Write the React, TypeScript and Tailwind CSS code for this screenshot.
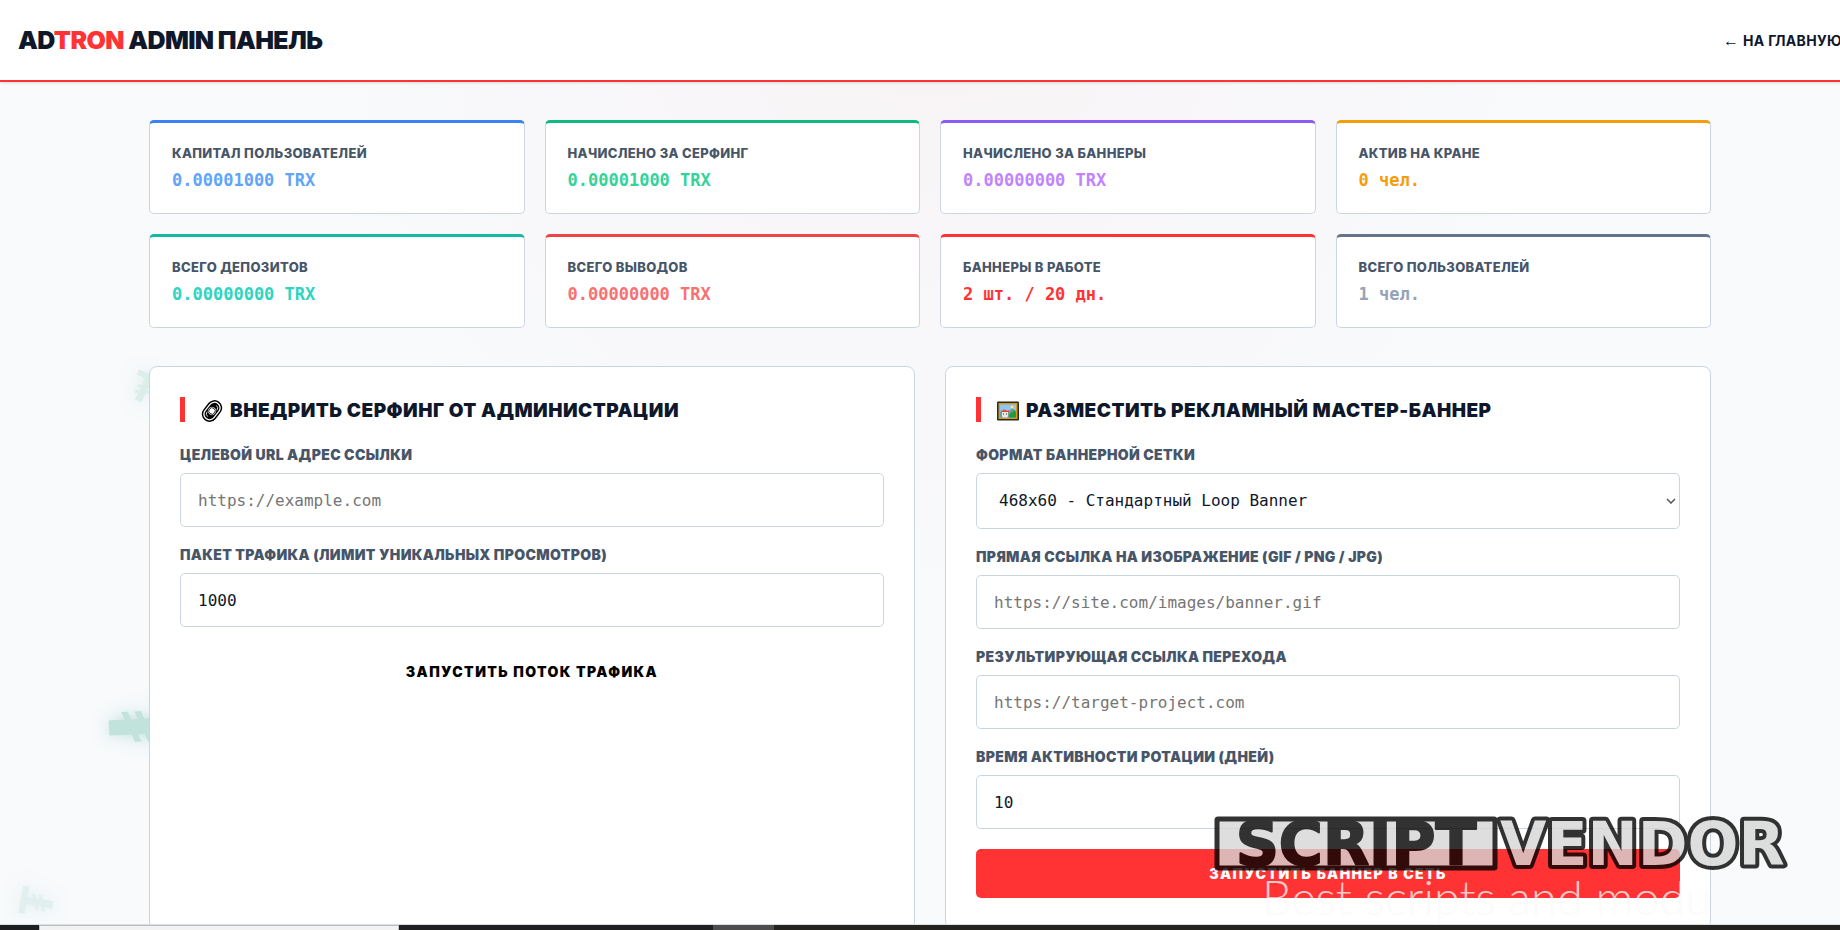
import React from "react";

const stats = [
    { label: "Капитал пользователей", value: "0.00001000 TRX", border: "border-t-[#3b82f6]", color: "text-[#60a5fa]" },
    { label: "Начислено за серфинг", value: "0.00001000 TRX", border: "border-t-[#10b981]", color: "text-[#34d399]" },
    { label: "Начислено за баннеры", value: "0.00000000 TRX", border: "border-t-[#8b5cf6]", color: "text-[#c084fc]" },
    { label: "Актив на кране", value: "0 чел.", border: "border-t-[#f59e0b]", color: "text-[#f59e0b]" },
    { label: "Всего депозитов", value: "0.00000000 TRX", border: "border-t-[#14b8a6]", color: "text-[#2dd4bf]" },
    { label: "Всего выводов", value: "0.00000000 TRX", border: "border-t-[#ef4444]", color: "text-[#f87171]" },
    { label: "Баннеры в работе", value: "2 шт. / 20 дн.", border: "border-t-[#ff3333]", color: "text-[#ff3333]" },
    { label: "Всего пользователей", value: "1 чел.", border: "border-t-[#64748b]", color: "text-[#94a3b8]" },
];

const control =
    "w-full rounded-[5px] border border-[#cbd5e1] bg-white font-['DejaVu_Sans_Mono',monospace] text-base text-[#0f172a] placeholder:text-[#757575] outline-none focus:border-[#ff3333]";

const Header = () => (
    <header className="flex h-[82px] shrink-0 items-center justify-between border-b-2 border-[#ff3333] bg-white px-[18px] pt-[2px] shadow-sm">
        <h1 className="text-[25px] font-black tracking-tight">
            AD<span className="text-[#ff3333]">TRON</span> ADMIN ПАНЕЛЬ
        </h1>
        <a href="/" className="whitespace-nowrap text-sm font-bold uppercase tracking-wide hover:text-[#ff3333]">
            <span className="font-['Liberation_Serif',serif] text-base leading-none font-normal">←</span> На главную
        </a>
    </header>
);

type FieldProps = { id: string; label: string; children: React.ReactNode };

const Field = ({ id, label, children }: FieldProps) => (
    <div className="mb-5">
        <label htmlFor={id} className="mb-[10px] block text-sm leading-4 font-black uppercase tracking-wide text-[#475569]">
            {label}
        </label>
        {children}
    </div>
);

const TextField = ({ id, label, ...rest }: { id: string; label: string } & React.InputHTMLAttributes<HTMLInputElement>) => (
    <Field id={id} label={label}>
        <input id={id} className={`${control} h-[54px] px-[17px]`} {...rest} />
    </Field>
);

const Panel = ({ icon, title, children }: { icon: React.ReactNode; title: string; children: React.ReactNode }) => (
    <section className="rounded-lg border border-[#cbd5e1] bg-white p-[30px]">
        <h2 className="mb-[25px] flex h-[25px] items-center gap-[7px] border-l-[5px] border-[#ff3333] pt-[3px] pl-4 text-[19px] font-black uppercase tracking-wide">
            {icon}
            {title}
        </h2>
        {children}
    </section>
);

const LinkIcon = () => (
    <svg viewBox="0 0 22 22" className="h-[22px] w-[22px]" fill="none">
        <g transform="rotate(-52 11 11)">
            <rect x="0" y="4" width="22" height="14" rx="7" fill="#fff" stroke="#000" strokeWidth="1.5" />
            <rect x="2" y="6" width="18" height="10" rx="5" fill="#000" />
            <path d="M4 11a3.4 3.4 0 0 1 3.4-3.4M18 11a3.4 3.4 0 0 1-3.4 3.4" stroke="#fff" strokeWidth="0.8" />
            <circle cx="11" cy="11" r="4" fill="#fff" />
            <circle cx="11" cy="11" r="3.2" stroke="#000" strokeWidth="0.8" />
        </g>
    </svg>
);

const PictureIcon = () => (
    <svg viewBox="0 0 22 20" className="h-5 w-[22px]">
        <rect width="22" height="19" y="0.5" rx="1" fill="#26282b" />
        <rect x="1.5" y="2" width="19" height="16" fill="#d89a16" />
        <rect x="3" y="3.5" width="16" height="13" fill="#8cc8f0" />
        <path d="M3 11l4-3 4 3 4-4 4 3v6.500H3z" fill="#6f9d90" />
        <circle cx="15" cy="6" r="1.500" fill="#ffe680" />
        <path d="M12 16.500c0-4 2-5 3-5s1-2 2-2 2 2 2 3v4z" fill="#239a3b" />
        <path d="M5 8.500l1.500 1.500h3L11 8.500v7l-1 1H6l-1-1z" fill="#e8e8e8" />
        <path d="M4.500 9.500h7.500v1.500H4.500z" fill="#ef3b2d" />
        <path d="M6 12.500h1v1H6zM9 12.500h1v1H9z" fill="#333" />
    </svg>
);

/* Floating currency signs behind the content */
const Background = () => (
    <svg
        className="pointer-events-none absolute inset-0 h-full w-full font-['Inter',sans-serif] font-extrabold [text-shadow:0_0_15px_#26a17b]"
        fill="#26a17b"
        textAnchor="middle"
        aria-hidden="true"
    >
        <text transform="translate(138 401) rotate(25)" fontSize="40" opacity="0.13">₮</text>
        <text transform="translate(109 728) rotate(87)" fontSize="88" opacity="0.25">₮</text>
        <text transform="translate(53 905) rotate(-80)" fontSize="45" opacity="0.1">₮</text>
    </svg>
);

const Watermark = () => (
    <svg
        viewBox="0 0 630 110"
        className="pointer-events-none absolute right-0 bottom-[5px] h-[110px] w-[630px]"
        aria-hidden="true"
    >
        <g opacity="0.8" className="font-['DejaVu_Sans',sans-serif] font-bold" fontSize="60" strokeLinejoin="round">
            <rect x="7" y="4" width="278" height="49" rx="1" fill="#d6d6d6" stroke="#000" strokeWidth="5" />
            <text x="146" y="50" textAnchor="middle" stroke="#000" strokeWidth="2">SCRIPT</text>
            <text x="290" y="50" fill="#d6d6d6" stroke="#000" strokeWidth="8" paintOrder="stroke">VENDOR</text>
        </g>
        <text x="52" y="100" fontSize="47" fill="#fafafa" opacity="0.75" className="font-['Lato',sans-serif] font-light">
            Best scripts and modu
        </text>
    </svg>
);

const Taskbar = () => (
    <div className="relative z-10 flex h-[6px] shrink-0 border-t border-[#d5e0e8] bg-[#24231d]">
        <div className="w-[39px] bg-[#1e1f21]" />
        <div className="w-[360px] border border-b-0 border-[#bdbdbd] bg-[#f2f2f2]" />
        <div className="w-[314px] bg-[#1e1f21]" />
        <div className="w-[61px] bg-[#4d4d4d]" />
    </div>
);

const App = () => {
    return (
        <div className="relative flex h-screen flex-col overflow-hidden bg-[#f8fafc] font-['Inter',sans-serif] text-[#0f172a]">
            <div className="-mr-5 flex min-h-0 flex-1 flex-col overflow-hidden bg-[radial-gradient(circle_at_50%_0%,rgba(255,51,51,0.03)_0%,transparent_50%)]">
                <Background />
                <Header />
                <main className="relative mx-auto mt-[38px] w-full max-w-[1562px]">
                    <div className="mb-[38px] grid grid-cols-4 gap-5">
                        {stats.map((s) => (
                            <div
                                key={s.label}
                                className={`rounded-[5px] border border-t-[3px] border-[#cbd5e1] bg-white px-[22px] pt-[22px] pb-[21px] ${s.border}`}
                            >
                                <div className="mb-2 text-[13px] leading-4 font-extrabold uppercase tracking-wide text-[#475569]">
                                    {s.label}
                                </div>
                                <div className={`font-['DejaVu_Sans_Mono',monospace] text-[17px] leading-[23px] font-bold ${s.color}`}>
                                    {s.value}
                                </div>
                            </div>
                        ))}
                    </div>

                    <div className="grid grid-cols-2 gap-[30px]">
                        <Panel icon={<LinkIcon />} title="Внедрить серфинг от администрации">
                            <form onSubmit={(e) => e.preventDefault()}>
                                <TextField id="surf-url" label="Целевой URL адрес ссылки" placeholder="https://example.com" />
                                <TextField id="surf-limit" label="Пакет трафика (лимит уникальных просмотров)" defaultValue="1000" />
                                <button type="submit" className="h-[49px] w-full rounded-[5px] text-sm font-black uppercase tracking-widest text-black">
                                    Запустить поток трафика
                                </button>
                            </form>
                        </Panel>

                        <Panel icon={<PictureIcon />} title="Разместить рекламный мастер-баннер">
                            <form onSubmit={(e) => e.preventDefault()}>
                                <Field id="banner-size" label="Формат баннерной сетки">
                                    <div className="relative">
                                        <select id="banner-size" className={`${control} block h-14 appearance-none px-[22px]`}>
                                            <option>468x60 - Стандартный Loop Banner</option>
                                        </select>
                                        <svg
                                            viewBox="0 0 10 6"
                                            className="pointer-events-none absolute top-[25px] right-1 h-[6px] w-[10px]"
                                            fill="none"
                                            stroke="#555"
                                            strokeWidth="1.5"
                                        >
                                            <path d="M1 1l4 4 4-4" />
                                        </svg>
                                    </div>
                                </Field>
                                <TextField
                                    id="banner-img"
                                    label="Прямая ссылка на изображение (GIF / PNG / JPG)"
                                    placeholder="https://site.com/images/banner.gif"
                                />
                                <TextField id="banner-url" label="Результирующая ссылка перехода" placeholder="https://target-project.com" />
                                <TextField id="banner-days" label="Время активности ротации (дней)" defaultValue="10" />
                                <button
                                    type="submit"
                                    className="h-[49px] w-full rounded-[5px] bg-[#ff3333] text-sm font-black uppercase tracking-widest text-white"
                                >
                                    Запустить баннер в сеть
                                </button>
                            </form>
                        </Panel>
                    </div>
                </main>
            </div>
            <Watermark />
            <Taskbar />
        </div>
    );
};

export default App;
